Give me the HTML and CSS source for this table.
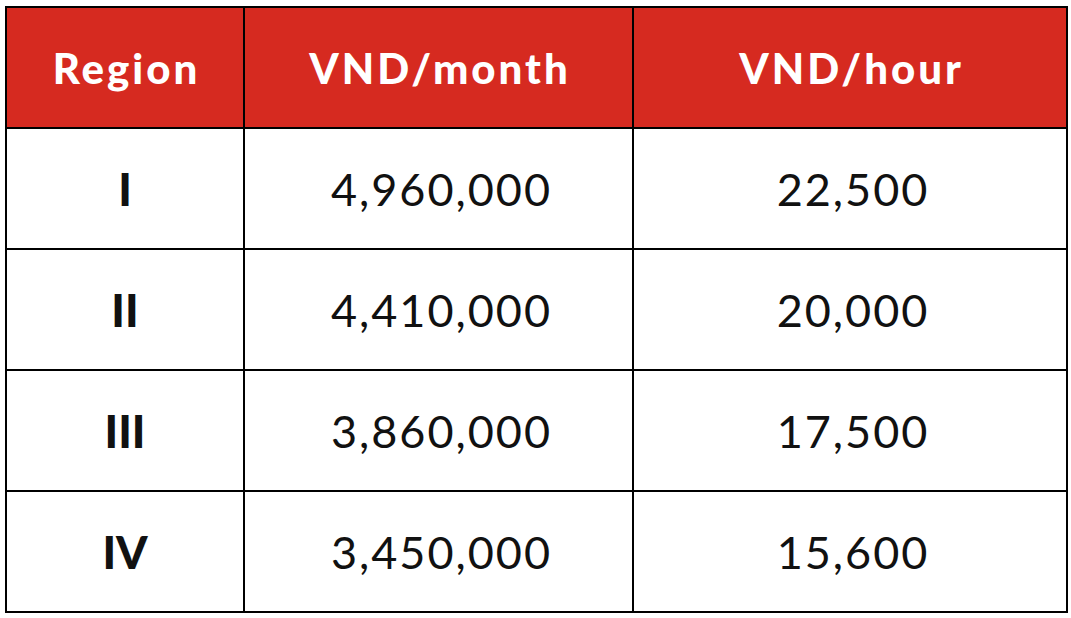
FILE: index.html
```html
<!DOCTYPE html>
<html lang="en">
<head>
<meta charset="utf-8">
<title>Minimum wage by region</title>
<link rel="stylesheet" href="styles.css">
</head>
<body>
<div class="page">
  <table class="wage-table">
    <colgroup>
      <col class="col-region">
      <col class="col-month">
      <col class="col-hour">
    </colgroup>
    <thead>
      <tr>
        <th>Region</th>
        <th>VND/month</th>
        <th>VND/hour</th>
      </tr>
    </thead>
    <tbody>
      <tr><td class="region">I</td><td>4,960,000</td><td>22,500</td></tr>
      <tr><td class="region">II</td><td>4,410,000</td><td>20,000</td></tr>
      <tr><td class="region">III</td><td>3,860,000</td><td>17,500</td></tr>
      <tr><td class="region">IV</td><td>3,450,000</td><td>15,600</td></tr>
    </tbody>
  </table>
</div>
</body>
</html>
```

FILE: styles.css
```css
html, body {
  margin: 0;
  padding: 0;
  background: #ffffff;
}

.page {
  padding: 6px 4px 0 5px;
}

.wage-table {
  border-collapse: collapse;
  table-layout: fixed;
  width: 1061px;
  font-family: "Lato", "Liberation Sans", sans-serif;
  color: #111111;
}

.col-region { width: 238px; }
.col-month { width: 389px; }
.col-hour { width: 434px; }

.wage-table th,
.wage-table td {
  border: 2px solid #000000;
  height: 119px;
  padding: 0;
  text-align: center;
  vertical-align: middle;
}

.wage-table th {
  background: #d62a20;
  color: #ffffff;
  font-weight: 900;
  font-size: 42px;
  letter-spacing: 3px;
  text-indent: 3px;
}

.wage-table td {
  font-size: 45px;
  font-weight: 400;
  letter-spacing: 2px;
  text-indent: 6px;
}

.wage-table td.region {
  font-weight: 900;
  letter-spacing: 0;
  text-indent: 0;
}
```
